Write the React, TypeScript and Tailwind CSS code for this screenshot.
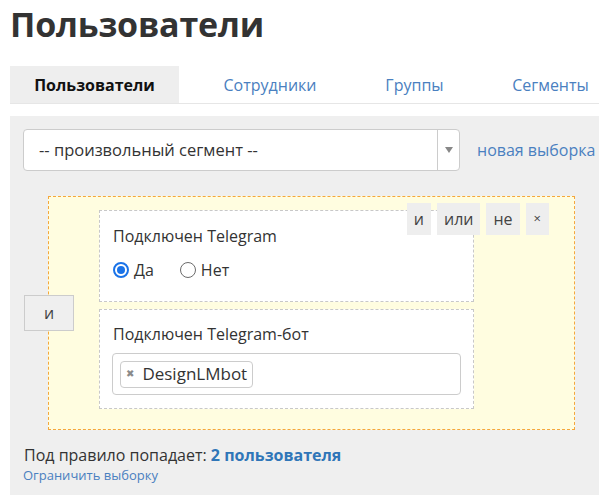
import { useState } from "react";

const TABS = [
  { label: "Пользователи", width: "w-[169px]" },
  { label: "Сотрудники", width: "w-[182px]" },
  { label: "Группы", width: "w-[107px]" },
  { label: "Сегменты", width: "w-[165px]" },
];

function OpButton({ children }: { children: React.ReactNode }) {
  return (
    <button
      type="button"
      className="flex h-[32px] items-center bg-[#eeeeee] px-[7px] text-[16px] text-[#444]"
    >
      {children}
    </button>
  );
}

function Radio({ checked, label, onClick }: { checked: boolean; label: string; onClick: () => void }) {
  return (
    <label className="flex cursor-pointer items-center gap-[5px]" onClick={onClick}>
      <span
        className={
          checked
            ? "flex h-[16px] w-[16px] items-center justify-center rounded-full border-2 border-[#1a73e8] bg-white"
            : "h-[16px] w-[16px] rounded-full border-[1.5px] border-[#6b6b6b] bg-white"
        }
      >
        {checked && <span className="h-[8px] w-[8px] rounded-full bg-[#1a73e8]" />}
      </span>
      <span className="text-[16px] text-[#333]">{label}</span>
    </label>
  );
}

export default function App() {
  const [active, setActive] = useState(0);
  const [telegram, setTelegram] = useState(true);

  return (
    <div className="h-[495px] w-[599px] overflow-hidden bg-white font-['Open_Sans','Noto_Sans',sans-serif] text-[#333]">
      <div className="w-[640px] pl-[10px]">
        <h1 className="m-0 pt-[1px] text-[34px] font-bold leading-[46px] tracking-[-0.2px] text-[#333]">Пользователи</h1>

        <div className="mt-[19px] flex border-b border-[#e6e6e6]">
          {TABS.map((tab, i) => (
            <button
              key={tab.label}
              type="button"
              onClick={() => setActive(i)}
              className={
                i === active
                  ? `h-[37px] ${tab.width} bg-[#eeeeee] text-[16px] font-bold text-[#111]`
                  : `h-[37px] ${tab.width} text-[16px] text-[#4a80c0]`
              }
            >
              {tab.label}
            </button>
          ))}
        </div>

        <div className="mt-[12px] bg-[#efefef] px-[13px] pb-[40px] pt-[13px]">
          <div className="flex items-center gap-[17px]">
            <div className="flex h-[42px] w-[437px] items-center rounded-[4px] border border-[#cccccc] bg-white">
              <span className="flex-1 pl-[15px] text-[16.5px] text-[#333]">-- произвольный сегмент --</span>
              <span className="flex h-full w-[22px] items-center justify-center border-l border-[#cccccc]">
                <svg width="8" height="6" viewBox="0 0 8 6">
                  <path d="M0 0h8L4 6z" fill="#888" />
                </svg>
              </span>
            </div>
            <a className="text-[16px] text-[#4a80c0]">новая выборка</a>
          </div>

          <div className="relative mt-[25px] pl-[25px]">
            <div className="relative w-[527px] border border-dashed border-[#f5a73b] bg-[#fffde0] pb-[20px] pl-[50px] pt-[13px]">
              <div className="flex w-[375px] flex-col gap-[7px]">
                <div className="h-[92px] border border-dashed border-[#c8c8c8] bg-white px-[13px] pt-[15px]">
                  <div className="text-[16px] leading-[20px] text-[#333]">Подключен Telegram</div>
                  <div className="mt-[12px] flex items-center gap-[26px]">
                    <Radio checked={telegram} label="Да" onClick={() => setTelegram(true)} />
                    <Radio checked={!telegram} label="Нет" onClick={() => setTelegram(false)} />
                  </div>
                </div>

                <div className="h-[100px] border border-dashed border-[#c8c8c8] bg-white px-[12px] pt-[14px]">
                  <div className="pl-[1px] text-[16px] leading-[20px] text-[#333]">Подключен Telegram-бот</div>
                  <div className="mt-[9px] flex h-[42px] items-center rounded-[4px] border border-[#cccccc] bg-white px-[7px]">
                    <span className="flex h-[27px] items-center gap-[8px] rounded-[4px] border border-[#cccccc] px-[5px] text-[17px] text-[#333]">
                      <span className="font-['DejaVu_Sans',sans-serif] text-[10px] leading-none text-[#8a8a8a]">✖</span>
                      DesignLMbot
                    </span>
                  </div>
                </div>
              </div>

              <div className="absolute right-[25px] top-[6px] flex gap-[6px]">
                <OpButton>и</OpButton>
                <OpButton>или</OpButton>
                <OpButton>не</OpButton>
                <OpButton>
                  <span className="px-[1px] text-[13px]">×</span>
                </OpButton>
              </div>
            </div>

            <button
              type="button"
              className="absolute left-[1px] top-1/2 z-10 flex h-[36px] w-[50px] -translate-y-1/2 items-center justify-center border border-[#cccccc] bg-[#efefef] text-[16px] text-[#444]"
            >
              и
            </button>
          </div>

          <div className="mt-[14px] pl-[1px] text-[16px] leading-[22px] text-[#333]">
            Под правило попадает: <span className="font-bold text-[#2f76b8]">2 пользователя</span>
          </div>
          <a className="block text-[13px] leading-[18px] text-[#4a80c0]">Ограничить выборку</a>
        </div>
      </div>
    </div>
  );
}
